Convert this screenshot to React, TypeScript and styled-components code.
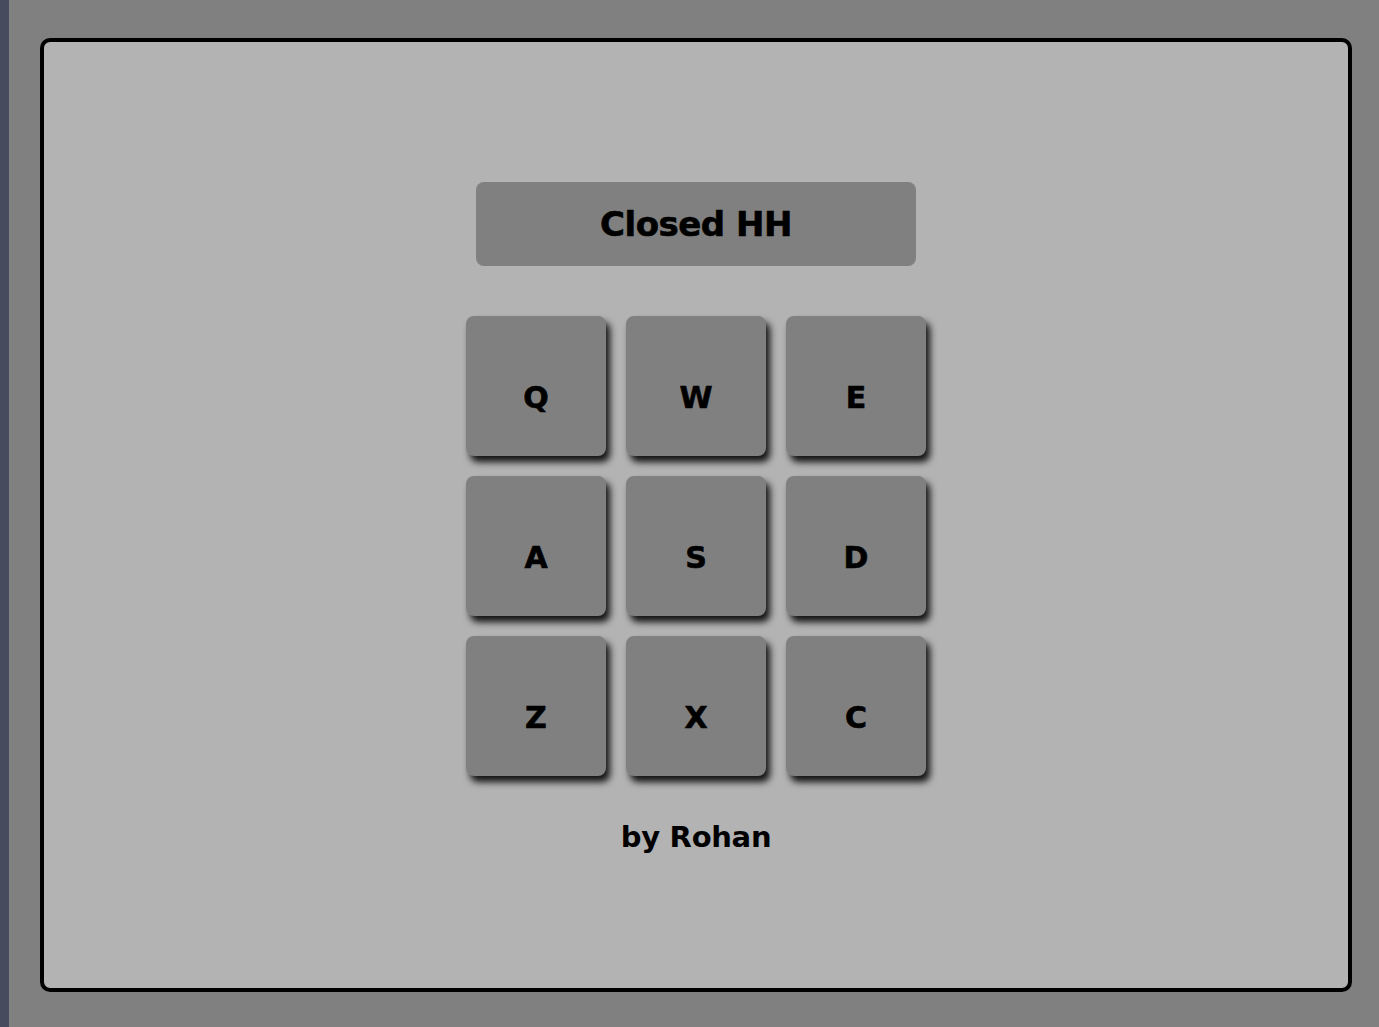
import styled, { createGlobalStyle } from "styled-components";

const GlobalStyle = createGlobalStyle`
  html, body {
    margin: 0;
    padding: 0;
    background: #808080;
  }
  * {
    box-sizing: border-box;
  }
`;

const Page = styled.div`
  display: flex;
  width: 100%;
  height: 1027px;
  background: #808080;
  font-family: "DejaVu Sans", "Liberation Sans", sans-serif;
`;

const SideStrip = styled.div`
  width: 9px;
  flex: none;
  background: #474b5e;
`;

const Stage = styled.main`
  flex: 1;
  padding: 38px 27px 35px 31px;
  display: flex;
`;

const Panel = styled.section`
  flex: 1;
  background: #b3b3b3;
  border: 4px solid #000;
  border-radius: 10px;
  display: flex;
  flex-direction: column;
  align-items: center;
  padding-top: 140px;
`;

const Title = styled.h1`
  margin: 0;
  width: 440px;
  height: 84px;
  background: #808080;
  border-radius: 8px;
  display: flex;
  align-items: center;
  justify-content: center;
  font-size: 34px;
  font-weight: 700;
  letter-spacing: -0.5px;
  color: #000;
  -webkit-text-stroke: 0.6px #000;
`;

const KeyGrid = styled.div`
  margin-top: 50px;
  display: grid;
  grid-template-columns: repeat(3, 140px);
  grid-auto-rows: 140px;
  gap: 20px;
`;

const Key = styled.button`
  border: none;
  padding: 22px 0 0;
  background: #808080;
  border-radius: 8px;
  box-shadow: 4px 6px 7px rgba(0, 0, 0, 0.9);
  display: flex;
  align-items: center;
  justify-content: center;
  font-family: inherit;
  font-size: 30px;
  font-weight: 700;
  color: #000;
  -webkit-text-stroke: 0.6px #000;
  cursor: pointer;
`;

const Credit = styled.p`
  margin: 44px 0 0;
  font-size: 29px;
  font-weight: 700;
  letter-spacing: -0.3px;
  color: #000;
`;

const keys = ["Q", "W", "E", "A", "S", "D", "Z", "X", "C"];

export default function App() {
  return (
    <>
      <GlobalStyle />
      <Page>
        <SideStrip />
        <Stage>
          <Panel>
            <Title>Closed HH</Title>
            <KeyGrid>
              {keys.map((k) => (
                <Key key={k}>{k}</Key>
              ))}
            </KeyGrid>
            <Credit>by Rohan</Credit>
          </Panel>
        </Stage>
      </Page>
    </>
  );
}
